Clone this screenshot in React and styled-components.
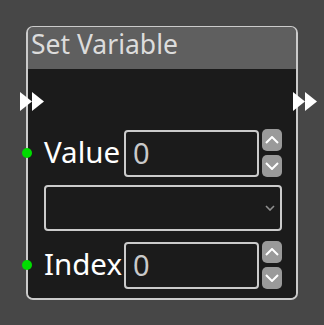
import React from "react";
import styled, { createGlobalStyle } from "styled-components";

const GlobalStyle = createGlobalStyle`
	html, body {
		margin: 0;
		padding: 0;
		background-color: #474747;
	}
	body {
		font-family: "Noto Sans", "Open Sans", sans-serif;
	}
`;

const Canvas = styled.div`
	width: 324px;
	height: 325px;
	padding: 26px 0 0 26px;
	box-sizing: border-box;
`;

const Node = styled.div`
	position: relative;
	width: 272px;
	border: 2px solid #cbcbcb;
	border-radius: 7px;
	box-sizing: border-box;
`;

const Header = styled.div`
	height: 42px;
	background-color: #5f5f5f;
	border-radius: 5px 5px 0 0;
	padding-left: 3px;
`;

const Title = styled.div`
	font-size: 26.5px;
	line-height: 35px;
	color: #dcdcdc;
	margin-top: -1px;
`;

const Body = styled.div`
	background-color: #1b1b1b;
	border-radius: 0 0 5px 5px;
	padding: 0 14px 9px 16px;
	display: flex;
	flex-direction: column;
`;

const FlowRow = styled.div`
	height: 60px;
`;

const FlowPin = styled.svg`
	position: absolute;
	top: 64px;
	${(p) => (p.$side === "left" ? "left: -8px;" : "right: -22px;")}
`;

const Row = styled.div`
	position: relative;
	display: flex;
	align-items: center;
	height: 48px;
	margin-top: ${(p) => p.$top || 0}px;
`;

const DataPin = styled.span`
	position: absolute;
	left: -22px;
	top: 50%;
	width: 10px;
	height: 10px;
	margin-top: -5px;
	border-radius: 50%;
	background-color: #00dd00;
`;

const Label = styled.div`
	width: 80px;
	font-size: 29.5px;
	line-height: 40px;
	color: #ffffff;
	padding-bottom: 3px;
	white-space: nowrap;
`;

const NumberBox = styled.div`
	width: 135px;
	height: 47px;
	border: 2px solid #cbcbcb;
	border-radius: 4px;
	box-sizing: border-box;
	padding-left: 7px;
	font-size: 29px;
	line-height: 42px;
	color: #c9c9c9;
`;

const Spinners = styled.div`
	display: flex;
	flex-direction: column;
	gap: 4px;
	margin-left: 3px;
`;

const SpinButton = styled.div`
	width: 20px;
	height: 22px;
	border-radius: 5px;
	background-color: #9a9a9a;
	display: flex;
	align-items: center;
	justify-content: center;
`;

const Select = styled.div`
	margin-top: 8px;
	height: 46px;
	border: 2px solid #cbcbcb;
	border-radius: 4px;
	box-sizing: border-box;
	display: flex;
	align-items: center;
	justify-content: flex-end;
	padding-right: 5px;
`;

const Chevron = ({ up, color = "#ffffff", w = 14, h = 8, sw = 2 }) => (
	<svg width={w} height={h} viewBox={`0 0 ${w} ${h}`}>
		<polyline
			points={
				up
					? `1,${h - 1} ${w / 2},1 ${w - 1},${h - 1}`
					: `1,1 ${w / 2},${h - 1} ${w - 1},1`
			}
			fill="none"
			stroke={color}
			strokeWidth={sw}
		/>
	</svg>
);

const Arrows = ({ side }) => (
	<FlowPin $side={side} width="25" height="19" viewBox="0 0 25 19">
		<polygon points="0,0 12,9.5 0,19" fill="#ffffff" />
		<polygon points="12,0 24,9.5 12,19" fill="#ffffff" />
	</FlowPin>
);

const NumberField = ({ label, value, top }) => (
	<Row $top={top}>
		<DataPin />
		<Label>{label}</Label>
		<NumberBox>{value}</NumberBox>
		<Spinners>
			<SpinButton>
				<Chevron up />
			</SpinButton>
			<SpinButton>
				<Chevron />
			</SpinButton>
		</Spinners>
	</Row>
);

const App = () => {
	return (
		<Canvas>
			<GlobalStyle />
			<Node>
				<Header>
					<Title>Set Variable</Title>
				</Header>
				<Body>
					<FlowRow />
					<NumberField label="Value" value="0" />
					<Select>
						<Chevron color="#8f8f8f" w={10} h={6} sw={1.6} />
					</Select>
					<NumberField label="Index" value="0" top={10} />
				</Body>
				<Arrows side="left" />
				<Arrows side="right" />
			</Node>
		</Canvas>
	);
};

export default App;
